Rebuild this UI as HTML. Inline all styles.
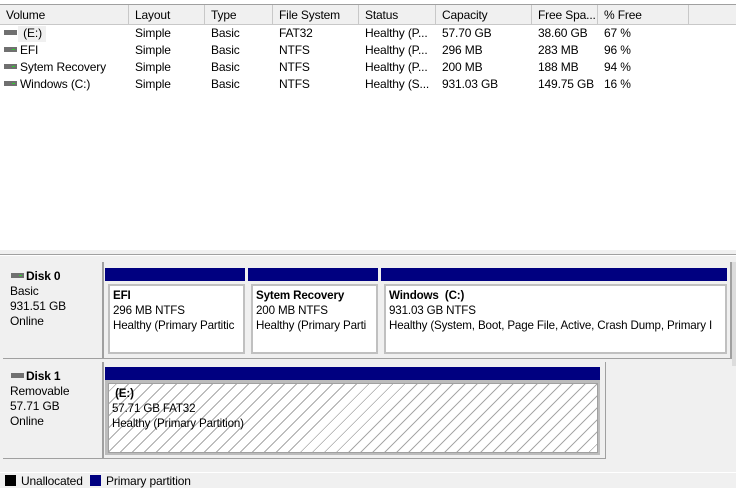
<!DOCTYPE html>
<html><head><meta charset="utf-8"><style>
*{margin:0;padding:0;box-sizing:border-box}
body{width:736px;height:488px;background:#f0f0f0;font-family:"Liberation Sans",sans-serif;font-size:12px;color:#000;position:relative;overflow:hidden;letter-spacing:-0.15px}
.a{position:absolute;white-space:nowrap}
.hd{position:absolute;top:5px;height:20px;background:#f0f0f0;border-right:1px solid #c8c8c8;border-bottom:1px solid #c8c8c8;padding:3px 0 0 6px;white-space:nowrap;overflow:hidden}
.r{position:absolute;white-space:nowrap;line-height:17px}
.ic{display:inline-block;width:13px;height:5px;background:#707070;vertical-align:middle;margin:0 3px 2px 4px;position:relative}
.ic.g:after{content:"";position:absolute;right:2px;top:2px;width:3px;height:1px;background:#2cd02c}
.blue{position:absolute;background:#000080;height:13px}
.box{position:absolute;background:#fff;border:2px solid #c0c0c0;padding:2px 0 0 3px;line-height:15px;overflow:hidden;white-space:nowrap;font-size:11.6px}
b{font-weight:bold}
</style></head><body>
<div class="a" style="left:0;top:0;width:736px;height:250px;background:#fff"></div>
<div class="a" style="left:0;top:4px;width:736px;height:1px;background:#a0a0a0"></div>
<div class="hd" style="left:0;width:129px">Volume</div>
<div class="hd" style="left:129px;width:76px">Layout</div>
<div class="hd" style="left:205px;width:68px">Type</div>
<div class="hd" style="left:273px;width:86px">File System</div>
<div class="hd" style="left:359px;width:77px">Status</div>
<div class="hd" style="left:436px;width:96px">Capacity</div>
<div class="hd" style="left:532px;width:66px">Free Spa...</div>
<div class="hd" style="left:598px;width:91px">% Free</div>
<div class="hd" style="left:689px;width:47px;border-right:none"></div>

<div class="a" style="left:18px;top:26px;width:28px;height:16px;background:#f0f0f0"></div>
<div class="r" style="left:0;top:25px"><span class="ic"></span> (E:)</div>
<div class="r" style="left:0;top:42px"><span class="ic g"></span>EFI</div>
<div class="r" style="left:0;top:59px"><span class="ic g"></span>Sytem Recovery</div>
<div class="r" style="left:0;top:76px"><span class="ic g"></span>Windows (C:)</div>
<div class="r" style="left:135px;top:25px">Simple<br>Simple<br>Simple<br>Simple</div>
<div class="r" style="left:211px;top:25px">Basic<br>Basic<br>Basic<br>Basic</div>
<div class="r" style="left:279px;top:25px">FAT32<br>NTFS<br>NTFS<br>NTFS</div>
<div class="r" style="left:365px;top:25px">Healthy (P...<br>Healthy (P...<br>Healthy (P...<br>Healthy (S...</div>
<div class="r" style="left:442px;top:25px">57.70 GB<br>296 MB<br>200 MB<br>931.03 GB</div>
<div class="r" style="left:538px;top:25px">38.60 GB<br>283 MB<br>188 MB<br>149.75 GB</div>
<div class="r" style="left:604px;top:25px">67 %<br>96 %<br>94 %<br>16 %</div>

<div class="a" style="left:0;top:254px;width:736px;height:1px;background:#a0a0a0"></div>
<div class="a" style="left:0;top:255px;width:736px;height:1px;background:#fff"></div>

<!-- Disk 0 -->
<div class="a" style="left:3px;top:262px;width:100px;height:97px;border-right:1px solid #a0a0a0;border-bottom:1px solid #a0a0a0;background:#f0f0f0"></div>
<div class="a" style="left:10px;top:269px;line-height:15px"><span class="ic g" style="margin:0 2px 2px 1px"></span><b>Disk 0</b><br>Basic<br>931.51 GB<br>Online</div>
<div class="a" style="left:103px;top:262px;width:629px;height:97px;border-left:1px solid #a0a0a0;border-right:2px solid #a0a0a0;border-bottom:1px solid #a0a0a0"></div>
<div class="blue" style="left:105px;top:268px;width:140px"></div>
<div class="blue" style="left:248px;top:268px;width:130px"></div>
<div class="blue" style="left:381px;top:268px;width:346px"></div>
<div class="box" style="left:108px;top:284px;width:137px;height:70px"><b>EFI</b><br>296 MB NTFS<br>Healthy (Primary Partitic</div>
<div class="box" style="left:251px;top:284px;width:127px;height:70px"><b>Sytem Recovery</b><br>200 MB NTFS<br>Healthy (Primary Parti</div>
<div class="box" style="left:384px;top:284px;width:343px;height:70px"><b>Windows&nbsp; (C:)</b><br>931.03 GB NTFS<br>Healthy (System, Boot, Page File, Active, Crash Dump, Primary I</div>

<!-- Disk 1 -->
<div class="a" style="left:3px;top:362px;width:100px;height:97px;border-right:1px solid #a0a0a0;border-bottom:1px solid #a0a0a0;background:#f0f0f0"></div>
<div class="a" style="left:10px;top:369px;line-height:15px"><span class="ic" style="margin:0 2px 2px 1px"></span><b>Disk 1</b><br>Removable<br>57.71 GB<br>Online</div>
<div class="a" style="left:103px;top:362px;width:503px;height:97px;border-left:1px solid #a0a0a0;border-right:1px solid #a0a0a0;border-bottom:1px solid #a0a0a0"></div>
<div class="blue" style="left:105px;top:367px;width:495px"></div>
<div class="a" style="left:105px;top:380px;width:495px;height:75px;background:#bcbcbc"></div>
<div class="box" style="left:108px;top:383px;width:490px;height:70px;border:1px solid #a0a0a0;background:#fff repeating-linear-gradient(-45deg,#fff 0,#fff 5px,#a8a8a8 5px,#a8a8a8 6px,#fff 6px,#fff 8.5px)"><b>&nbsp;(E:)</b><br>57.71 GB FAT32<br>Healthy (Primary Partition)</div>

<div class="a" style="left:732px;top:262px;width:4px;height:104px;background:#dcdcdc"></div>
<div class="a" style="left:0;top:472px;width:736px;height:1px;background:#fff"></div>
<div class="a" style="left:5px;top:475px;width:11px;height:11px;background:#000"></div>
<div class="a" style="left:21px;top:474px">Unallocated</div>
<div class="a" style="left:90px;top:475px;width:11px;height:11px;background:#000080"></div>
<div class="a" style="left:106px;top:474px">Primary partition</div>
</body></html>
